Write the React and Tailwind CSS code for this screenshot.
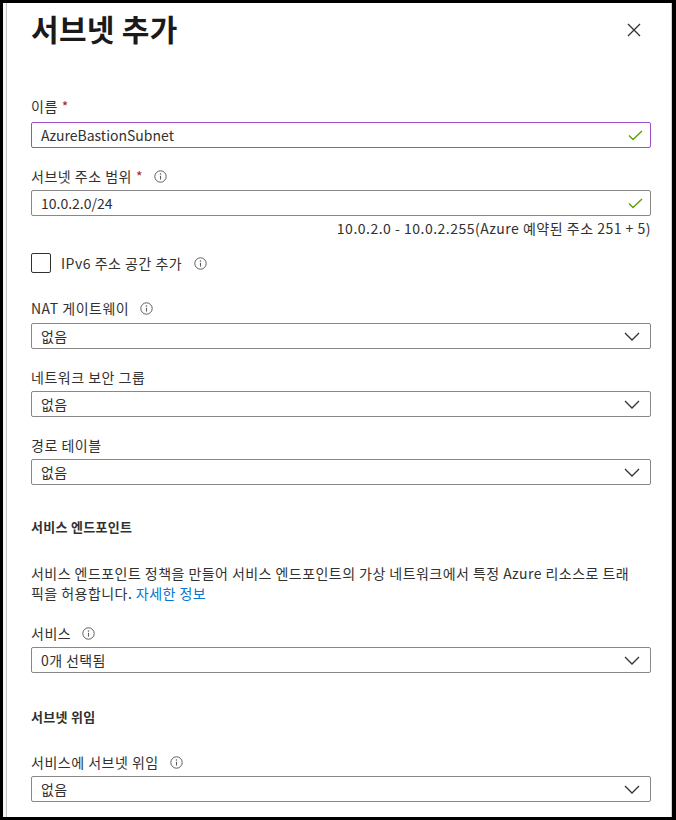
import React from "react";

const font = { fontFamily: '"Noto Sans CJK KR", "Noto Sans", sans-serif' };

const InfoIcon = () => (
    <svg width="13" height="13" viewBox="0 0 13 13" className="shrink-0">
        <circle cx="6.5" cy="6.5" r="5.7" fill="none" stroke="#605e5c" strokeWidth="1" />
        <circle cx="6.5" cy="4" r="0.8" fill="#605e5c" />
        <path d="M6.5 5.8V9.6" stroke="#605e5c" strokeWidth="1.1" />
    </svg>
);

const Check = () => (
    <svg width="15" height="11" viewBox="0 0 15 11">
        <path d="M1 5.6L5 9.6L14 1" fill="none" stroke="#57a300" strokeWidth="1.4" />
    </svg>
);

const Chevron = () => (
    <svg width="16" height="9" viewBox="0 0 16 9">
        <path d="M1 1L8 8L15 1" fill="none" stroke="#323130" strokeWidth="1.3" />
    </svg>
);

const Label = ({ text, required, info, className = "" }) => (
    <div className={`h-[20px] flex items-center text-[14px] tracking-[0.5px] text-[#323130] ${className}`}>
        <span>{text}</span>
        {required && <span className="text-[#a4262c] ml-[4px]">*</span>}
        {info && <span className="ml-[11px] flex items-center"><InfoIcon /></span>}
    </div>
);

const TextBox = ({ value, focused, className = "" }) => (
    <div className={`h-[26px] flex items-center justify-between pl-[9px] pr-[7px] rounded-[2px] border text-[14px] text-[#323130] ${focused ? "border-[#9b4fc9]" : "border-[#8a8886]"} ${className}`}>
        <span>{value}</span>
        <Check />
    </div>
);

const Dropdown = ({ value, className = "" }) => (
    <div className={`h-[26px] flex items-center justify-between pl-[9px] pr-[10px] rounded-[2px] border border-[#8a8886] text-[14px] tracking-[0.4px] text-[#323130] ${className}`}>
        <span>{value}</span>
        <Chevron />
    </div>
);

const Heading = ({ text, className = "" }) => (
    <div className={`h-[20px] flex items-center text-[13px] font-bold tracking-[0.3px] text-[#323130] ${className}`}>{text}</div>
);

export default function App() {
    return (
        <div style={font} className="w-[676px] h-[820px] bg-white border-black border-t-[3px] border-l-[3px] border-r-[4px] border-b-[3px] flex overflow-hidden">
            {/* blade behind this one */}
            <div className="w-[4px] shrink-0 bg-[#f6f6f6] border-r border-[#c8c6c4]" />

            <div className="flex-1 pl-[24px] pr-[20px] border-r border-[#d0d0d0]">
                <div className="flex items-center justify-between mt-[8px] h-[34px]">
                    <h1 className="text-[30px] font-bold tracking-[0.3px] text-[#1b1a19] leading-[34px]">서브넷 추가</h1>
                    <svg width="14" height="14" viewBox="0 0 14 14" className="mr-[10px] mt-[4px]">
                        <path d="M1 1L13 13M13 1L1 13" stroke="#323130" strokeWidth="1.3" />
                    </svg>
                </div>

                <Label text="이름" required className="mt-[51px]" />
                <TextBox value="AzureBastionSubnet" focused className="mt-[6px]" />

                <Label text="서브넷 주소 범위" required info className="mt-[18px]" />
                <TextBox value="10.0.2.0/24" className="mt-[4px]" />
                <div className="h-[20px] mt-[2px] flex items-center justify-end text-[14px] tracking-[0.5px] text-[#323130]">
                    10.0.2.0 - 10.0.2.255(Azure 예약된 주소 251 + 5)
                </div>

                <div className="h-[20px] mt-[15px] flex items-center text-[14px] tracking-[0.5px] text-[#323130]">
                    <div className="w-[20px] h-[20px] rounded-[2px] border border-[#323130]" />
                    <span className="ml-[10px]">IPv6 주소 공간 추가</span>
                    <span className="ml-[12px] flex items-center"><InfoIcon /></span>
                </div>

                <Label text="NAT 게이트웨이" info className="mt-[25px]" />
                <Dropdown value="없음" className="mt-[5px]" />

                <Label text="네트워크 보안 그룹" className="mt-[18px]" />
                <Dropdown value="없음" className="mt-[4px]" />

                <Label text="경로 테이블" className="mt-[18px]" />
                <Dropdown value="없음" className="mt-[4px]" />

                <Heading text="서비스 엔드포인트" className="mt-[32px]" />
                <div className="mt-[26px] text-[14px] leading-[20px] tracking-[0.45px] text-[#323130]">
                    <div className="whitespace-nowrap">서비스 엔드포인트 정책을 만들어 서비스 엔드포인트의 가상 네트워크에서 특정 Azure 리소스로 트래</div>
                    <div>픽을 허용합니다. <span className="text-[#0078d4]">자세한 정보</span></div>
                </div>

                <Label text="서비스" info className="mt-[20px]" />
                <Dropdown value="0개 선택됨" className="mt-[4px]" />

                <Heading text="서브넷 위임" className="mt-[34px]" />

                <Label text="서비스에 서브넷 위임" info className="mt-[25px]" />
                <Dropdown value="없음" className="mt-[4px]" />
            </div>
        </div>
    );
}
